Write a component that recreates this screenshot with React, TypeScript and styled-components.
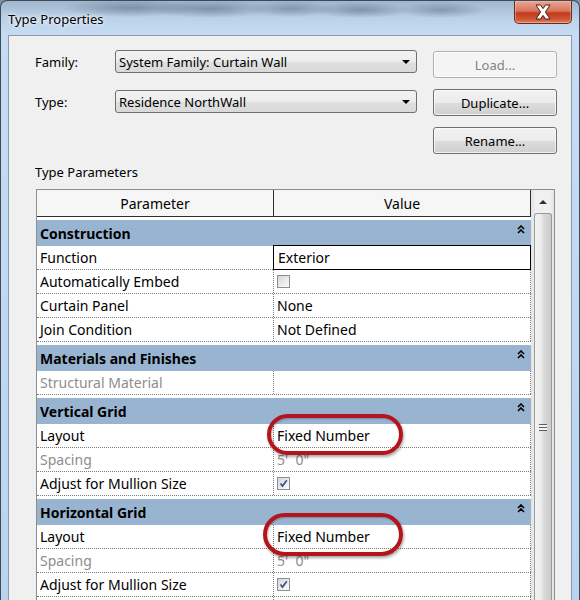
import React from 'react';
import styled, { createGlobalStyle } from 'styled-components';

const GlobalStyle = createGlobalStyle`
  html, body {
    margin: 0;
    padding: 0;
    background: #7d8fa3;
  }
  body {
    font-family: "Noto Sans", "Open Sans", "DejaVu Sans", sans-serif;
    color: #000;
  }
`;

const Window = styled.div`
  width: 580px;
  height: 600px;
  box-sizing: border-box;
  overflow: hidden;
  display: flex;
  flex-direction: column;
  border: 1px solid #3d4a58;
  border-bottom: none;
  border-radius: 7px 7px 0 0;
  background:
    radial-gradient(ellipse 70px 9px at 130px 7px, rgba(70, 88, 108, 0.45), transparent),
    radial-gradient(ellipse 60px 9px at 210px 8px, rgba(70, 88, 108, 0.45), transparent),
    radial-gradient(ellipse 45px 8px at 290px 8px, rgba(70, 88, 108, 0.4), transparent),
    radial-gradient(ellipse 50px 8px at 360px 9px, rgba(70, 88, 108, 0.45), transparent),
    radial-gradient(ellipse 45px 8px at 440px 9px, rgba(70, 88, 108, 0.4), transparent),
    linear-gradient(to bottom, #9fb6cd 0px, #bcd2ea 18px, #c6dcf3 34px, #bad4f0 100%);
`;

const TitleBar = styled.div`
  height: 34px;
  flex: none;
  display: flex;
  align-items: flex-start;
  padding-left: 7px;
`;

const Title = styled.div`
  margin-top: 8px;
  font-size: 13px;
  line-height: 20px;
  text-shadow: 0 0 6px rgba(255, 255, 255, 0.9), 0 0 3px rgba(255, 255, 255, 0.9);
`;

const CloseButton = styled.div`
  margin-left: auto;
  margin-right: 7px;
  width: 58px;
  height: 23px;
  box-sizing: border-box;
  border: 1px solid #6b2a1f;
  border-top: none;
  border-radius: 0 0 5px 5px;
  display: flex;
  align-items: center;
  justify-content: center;
  background: linear-gradient(to bottom, #e9a593 0%, #d9765c 45%, #c2391c 55%, #cf5a36 85%, #e3876a 100%);
  box-shadow: inset 0 0 0 1px rgba(255, 200, 190, 0.45);
`;

const Client = styled.div`
  flex: 1;
  margin: 0 7px;
  background: #f0f0f0;
  border: 1px solid #8b9aab;
  border-bottom: none;
  padding: 0 14px 0 26px;
  display: flex;
  flex-direction: column;
  min-height: 0;
`;

const TopArea = styled.div`
  display: flex;
  gap: 16px;
  flex: none;
`;

const Fields = styled.div`
  display: grid;
  grid-template-columns: 80px 302px;
  row-gap: 17px;
  align-items: center;
  padding-top: 14px;
  align-self: flex-start;
`;

const FieldLabel = styled.div`
  font-size: 13px;
`;

const Combo = styled.div`
  height: 23px;
  box-sizing: border-box;
  border: 1px solid #707070;
  border-radius: 3px;
  background: linear-gradient(to bottom, #f3f3f3 0%, #ececec 50%, #e0e0e0 51%, #d9d9d9 100%);
  display: flex;
  align-items: center;
  padding: 0 6px 0 3px;
  font-size: 13px;
  white-space: nowrap;
`;

const Caret = styled.span`
  margin-left: auto;
  width: 0;
  height: 0;
  border-left: 4px solid transparent;
  border-right: 4px solid transparent;
  border-top: 4px solid #000;
`;

const Buttons = styled.div`
  display: flex;
  flex-direction: column;
  gap: 11px;
  padding-top: 15px;
`;

const Button = styled.div<{ $disabled?: boolean }>`
  width: 124px;
  height: 27px;
  box-sizing: border-box;
  border: 1px solid ${p => (p.$disabled ? '#adb2b5' : '#707070')};
  border-radius: 3px;
  display: flex;
  align-items: center;
  justify-content: center;
  font-size: 13px;
  color: ${p => (p.$disabled ? '#838383' : '#000')};
  background: ${p =>
    p.$disabled
      ? '#f4f4f4'
      : 'linear-gradient(to bottom, #f2f2f2 0%, #ebebeb 50%, #dddddd 51%, #cfcfcf 100%)'};
  box-shadow: inset 0 0 0 1px rgba(255, 255, 255, 0.7);
`;

const SectionLabel = styled.div`
  flex: none;
  font-size: 13px;
  line-height: 18px;
  margin: 9px 0 8px;
`;

const Table = styled.div`
  flex: 1;
  min-height: 0;
  margin: 0 2px 0 1px;
  border: 1px solid #8a8f96;
  border-bottom: none;
  display: flex;
  background: #fff;
  overflow: hidden;
`;

const Grid = styled.div`
  flex: 1;
  display: flex;
  flex-direction: column;
  min-width: 0;
`;

const HeaderRow = styled.div`
  flex: none;
  display: grid;
  grid-template-columns: 237px 1fr;
  height: 27px;
  box-sizing: border-box;
  border-bottom: 1px solid #2e2e2e;
  background: #f6f6f6;
`;

const HeaderCell = styled.div`
  display: flex;
  align-items: center;
  justify-content: center;
  font-size: 14px;
  border-right: 1px solid #2e2e2e;
`;

const GroupRow = styled.div`
  flex: none;
  height: 29px;
  box-sizing: border-box;
  border-top: 3px solid #fff;
  background: #99b4d1;
  display: flex;
  align-items: center;
  padding: 0 6px 0 3px;
  font-size: 14px;
  font-weight: 700;
`;

const Collapse = styled.svg`
  margin-left: auto;
  align-self: flex-start;
  margin-top: 5px;
`;

const Row = styled.div`
  flex: none;
  display: grid;
  grid-template-columns: 237px 1fr;
  height: 24px;
  box-sizing: border-box;
  border-bottom: 1px dotted #7a7a7a;
`;

const ParamCell = styled.div<{ $disabled?: boolean }>`
  display: flex;
  align-items: center;
  padding-left: 3px;
  font-size: 14px;
  white-space: nowrap;
  color: ${p => (p.$disabled ? '#8d8d8d' : '#000')};
  border-right: 1px dotted #7a7a7a;
`;

const ValueCell = styled.div<{ $disabled?: boolean; $editing?: boolean }>`
  position: relative;
  display: flex;
  align-items: center;
  padding-left: 3px;
  font-size: 14px;
  white-space: pre;
  color: ${p => (p.$disabled ? '#8d8d8d' : '#000')};
  border-right: 1px dotted #7a7a7a;
  ${p =>
    p.$editing &&
    `
    margin: -1px 0 -1px -1px;
    padding-left: 4px;
    border: 1px solid #000;
  `}
`;

const Check = styled.div`
  width: 13px;
  height: 13px;
  box-sizing: border-box;
  border: 1px solid #8e8f8f;
  background: linear-gradient(135deg, #d4d4d4 0%, #eeeeee 60%, #fafafa 100%);
  display: flex;
  align-items: center;
  justify-content: center;
`;

const Annotation = styled.div<{ $left: number; $top: number; $w: number; $h: number }>`
  position: absolute;
  left: ${p => p.$left}px;
  top: ${p => p.$top}px;
  width: ${p => p.$w}px;
  height: ${p => p.$h}px;
  box-sizing: border-box;
  border: 4px solid #b4141b;
  border-radius: 22px;
  box-shadow: 1px 2px 3px rgba(0, 0, 0, 0.35), inset 1px 1px 2px rgba(0, 0, 0, 0.25);
  pointer-events: none;
  z-index: 2;
`;

const Scrollbar = styled.div`
  width: 23px;
  flex: none;
  display: flex;
  flex-direction: column;
  background: linear-gradient(to right, #e3e3e3 0%, #f0f0f0 20%, #f0f0f0 80%, #e3e3e3 100%);
`;

const ScrollArrow = styled.div`
  height: 23px;
  flex: none;
  display: flex;
  align-items: center;
  justify-content: center;
  &::before {
    content: '';
    width: 0;
    height: 0;
    border-left: 4px solid transparent;
    border-right: 4px solid transparent;
    border-bottom: 4px solid #303030;
  }
`;

const Thumb = styled.div`
  flex: 1;
  margin: 0 2px 0 3px;
  box-sizing: border-box;
  border: 1px solid #9a9a9a;
  border-bottom: none;
  border-radius: 3px 3px 0 0;
  background: linear-gradient(to right, #f4f4f4 0%, #eaeaea 40%, #d9d9d9 55%, #cdcdcd 100%);
  display: flex;
  justify-content: center;
  padding-top: 210px;
`;

const Gripper = styled.div`
  width: 8px;
  height: 7px;
  background: repeating-linear-gradient(to bottom, #5d5d5d 0 1px, #f4f4f4 1px 3px);
`;

type Item =
  | { kind: 'group'; label: string }
  | {
      kind: 'row';
      label: string;
      value?: string;
      disabled?: boolean;
      checkbox?: 'on' | 'off';
      editing?: boolean;
      mark?: { left: number; top: number; w: number; h: number };
    };

const items: Item[] = [
  { kind: 'group', label: 'Construction' },
  { kind: 'row', label: 'Function', value: 'Exterior', editing: true },
  { kind: 'row', label: 'Automatically Embed', checkbox: 'off' },
  { kind: 'row', label: 'Curtain Panel', value: 'None' },
  { kind: 'row', label: 'Join Condition', value: 'Not Defined' },
  { kind: 'group', label: 'Materials and Finishes' },
  { kind: 'row', label: 'Structural Material', disabled: true },
  { kind: 'group', label: 'Vertical Grid' },
  { kind: 'row', label: 'Layout', value: 'Fixed Number', mark: { left: -7, top: -10, w: 136, h: 41 } },
  { kind: 'row', label: 'Spacing', value: '5\'  0"', disabled: true },
  { kind: 'row', label: 'Adjust for Mullion Size', checkbox: 'on' },
  { kind: 'group', label: 'Horizontal Grid' },
  { kind: 'row', label: 'Layout', value: 'Fixed Number', mark: { left: -11, top: -12, w: 140, h: 43 } },
  { kind: 'row', label: 'Spacing', value: '5\'  0"', disabled: true },
  { kind: 'row', label: 'Adjust for Mullion Size', checkbox: 'on' },
  { kind: 'row', label: '' },
];

const CollapseIcon = () => (
  <Collapse width="8" height="9" viewBox="0 0 8 9">
    <path d="M1 4 L4 1 L7 4 M1 8 L4 5 L7 8" fill="none" stroke="#000" strokeWidth="1.6" />
  </Collapse>
);

const CheckBox: React.FC<{ checked: boolean }> = ({ checked }) => (
  <Check>
    {checked && (
      <svg width="9" height="9" viewBox="0 0 9 9">
        <path d="M1.5 4.5 L3.5 7 L7.8 1.2" fill="none" stroke="#3d4f97" strokeWidth="1.7" />
      </svg>
    )}
  </Check>
);

const CloseGlyph = () => (
  <svg width="20" height="16" viewBox="0 0 20 16">
    <path
      d="M3 1 H7.5 L10 4.6 L12.5 1 H17 L12.4 8 L17 15 H12.5 L10 11.4 L7.5 15 H3 L7.6 8 Z"
      fill="#fff"
      stroke="#4a1c14"
      strokeWidth="1"
      strokeLinejoin="round"
    />
  </svg>
);

export default function App() {
  return (
    <>
      <GlobalStyle />
      <Window>
        <TitleBar>
          <Title>Type Properties</Title>
          <CloseButton>
            <CloseGlyph />
          </CloseButton>
        </TitleBar>
        <Client>
          <TopArea>
            <Fields>
              <FieldLabel>Family:</FieldLabel>
              <Combo>
                System Family: Curtain Wall
                <Caret />
              </Combo>
              <FieldLabel>Type:</FieldLabel>
              <Combo>
                Residence NorthWall
                <Caret />
              </Combo>
            </Fields>
            <Buttons>
              <Button $disabled>Load...</Button>
              <Button>Duplicate...</Button>
              <Button>Rename...</Button>
            </Buttons>
          </TopArea>
          <SectionLabel>Type Parameters</SectionLabel>
          <Table>
            <Grid>
              <HeaderRow>
                <HeaderCell>Parameter</HeaderCell>
                <HeaderCell>Value</HeaderCell>
              </HeaderRow>
              {items.map((item, i) =>
                item.kind === 'group' ? (
                  <GroupRow key={i}>
                    {item.label}
                    <CollapseIcon />
                  </GroupRow>
                ) : (
                  <Row key={i}>
                    <ParamCell $disabled={item.disabled}>{item.label}</ParamCell>
                    <ValueCell $disabled={item.disabled} $editing={item.editing}>
                      {item.checkbox ? <CheckBox checked={item.checkbox === 'on'} /> : item.value}
                      {item.mark && (
                        <Annotation
                          $left={item.mark.left}
                          $top={item.mark.top}
                          $w={item.mark.w}
                          $h={item.mark.h}
                        />
                      )}
                    </ValueCell>
                  </Row>
                )
              )}
            </Grid>
            <Scrollbar>
              <ScrollArrow />
              <Thumb>
                <Gripper />
              </Thumb>
            </Scrollbar>
          </Table>
        </Client>
      </Window>
    </>
  );
}
